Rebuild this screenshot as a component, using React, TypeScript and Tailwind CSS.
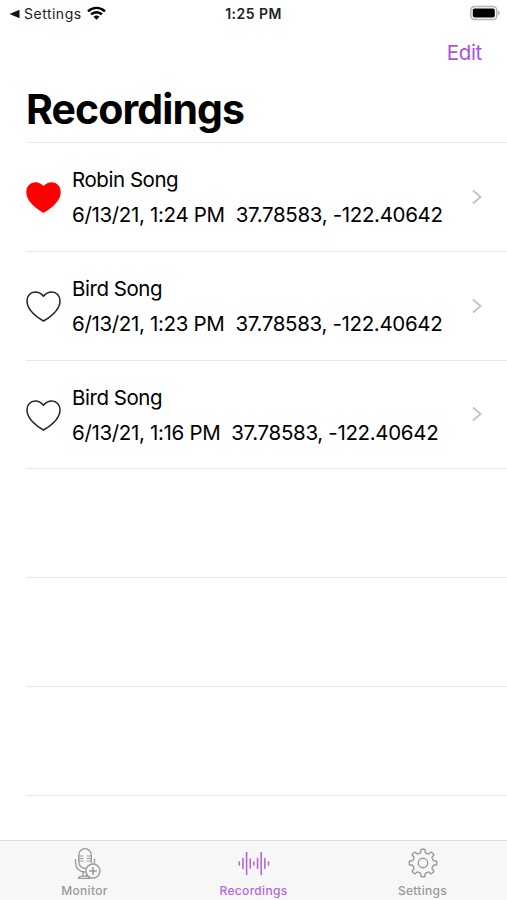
interface Recording {
  name: string;
  date: string;
  location: string;
  favorite: boolean;
}

const recordings: Recording[] = [
  { name: 'Robin Song', date: '6/13/21, 1:24 PM', location: '37.78583, -122.40642', favorite: true },
  { name: 'Bird Song', date: '6/13/21, 1:23 PM', location: '37.78583, -122.40642', favorite: false },
  { name: 'Bird Song', date: '6/13/21, 1:16 PM', location: '37.78583, -122.40642', favorite: false },
];

const emptyRows = [1, 2, 3];

// half height of each bar in the waveform icon
const bars = [1.5, 5, 11, 4.5, 1.5, 5, 11, 5, 1.5];

function gearPath() {
  const points: string[] = [];
  for (let i = 0; i < 8; i++) {
    for (const [offset, radius] of [[-16, 10.4], [-12, 10.8], [-9, 13.2], [-7, 13.8], [7, 13.8], [9, 13.2], [12, 10.8], [16, 10.4]]) {
      const a = ((i * 45 + offset) * Math.PI) / 180;
      points.push(`${(15 + radius * Math.sin(a)).toFixed(2)} ${(15 - radius * Math.cos(a)).toFixed(2)}`);
    }
  }
  return `M${points.join('L')}Z`;
}

function Heart({ filled }: { filled: boolean }) {
  return (
    <svg className="w-9 h-[35px] shrink-0 pt-[3px]" viewBox="1 0 36 32" fill={filled ? '#ff0000' : 'none'} stroke={filled ? '#ff0000' : '#222'} strokeWidth={1.5} strokeLinejoin="round">
      <path d="M18.5 5.3C16.2 2.4 13.5 1 10.3 1C5.5 1 2 4.8 2 9.9C2 17.8 8.5 24 18.5 30C28.5 24 35 17.8 35 9.9C35 4.8 31.5 1 26.7 1C23.5 1 20.8 2.4 18.5 5.3Z" />
    </svg>
  );
}

function MonitorIcon() {
  return (
    <svg className="w-[30px] h-[34px]" viewBox="0 0 30 34" fill="none" stroke="currentColor" strokeWidth={1.3} strokeLinecap="round">
      <path d="M14 21.5C10 21.5 6.8 19 6.8 15V8C6.8 4.4 9.5 1.6 13 1.6S19.3 4.4 19.3 8V15.5" />
      <path d="M7 9h4M7 11.5h4M7 14h4M15.2 9h4M15.2 11.5h4M15.2 14h4" strokeWidth={1.2} />
      <path d="M3.5 12.5v3.3C3.5 21.2 7.5 25 13 25M22.5 12.5V16M11 25v4.3M14.5 25.5v3.8M6.5 31.3C6.5 29.6 8.5 29.2 10.5 29.2h5C16.8 29.2 17.4 29.8 17.6 31.3Z" />
      <circle cx="21" cy="24" r="7" fill="#f7f7f7" />
      <path d="M21 20.7v6.6M17.7 24h6.6" strokeWidth={1.6} />
    </svg>
  );
}

function WaveIcon() {
  return (
    <svg className="w-[34px] h-[34px]" viewBox="0 0 34 34" stroke="currentColor" strokeWidth={1.6} strokeLinecap="round">
      {bars.map((h, i) => (
        <line key={i} x1={2.3 + i * 3.65} x2={2.3 + i * 3.65} y1={16.5 - h} y2={16.5 + h} />
      ))}
    </svg>
  );
}

function SettingsIcon() {
  return (
    <svg className="w-[30px] h-[30px]" viewBox="0 0 30 30" fill="none" stroke="currentColor" strokeWidth={1.4} strokeLinejoin="round">
      <path d={gearPath()} />
      <circle cx="15" cy="15" r="4.7" />
    </svg>
  );
}

export default function App() {
  return (
    <div className="w-[507px] h-[900px] flex flex-col bg-white text-black overflow-hidden font-['Inter','Liberation_Sans',sans-serif]">
      {/* Status bar */}
      <header className="grid grid-cols-3 items-center h-7 shrink-0 pl-[9px] pr-1.5">
        <div className="flex items-center text-sm text-[#222] tracking-[0.5px]">
          <svg className="w-[11px] h-2.5 mr-1" viewBox="0 0 11 10" fill="#111">
            <path d="M0.5 5L10.5 0.7V9.3Z" />
          </svg>
          Settings
          <svg className="w-[19px] h-3.5 ml-[5px] -mt-0.5" viewBox="0 0 20 14" fill="none" stroke="#000" strokeWidth={2.6}>
            <path d="M1.1 5.2C6.2 0.4 13.8 0.4 18.9 5.2M4.3 8.5C7.6 5.4 12.4 5.4 15.7 8.5" />
            <path d="M6.9 10.9C8.6 9.2 11.4 9.2 13.1 10.9L10 14Z" fill="#000" stroke="none" />
          </svg>
        </div>
        <p className="text-center text-sm font-semibold text-[#222] tracking-[0.45px] pr-[3px]">1:25 PM</p>
        <svg className="w-8 h-4 justify-self-end -mt-0.5" viewBox="0 0 32 16">
          <rect x="1.8" y="1.5" width="26" height="13" rx="3.8" fill="#fff" stroke="#b5b5b5" strokeWidth={1.5} />
          <rect x="3.8" y="3.5" width="22" height="9" rx="1.8" />
          <path d="M29.2 5.5C31.4 6.3 31.4 9.7 29.2 10.5Z" fill="#b5b5b5" />
        </svg>
      </header>

      <div className="flex justify-end items-center h-12 shrink-0 pt-0.5 pr-[25px]">
        <button className="text-[20.5px] tracking-[-0.3px] text-[#af52de]">Edit</button>
      </div>
      <h1 className="h-[66px] shrink-0 pl-[26px] pt-1.5 text-[41px] leading-[54px] font-bold tracking-[-0.9px]">Recordings</h1>

      {/* List */}
      <ul className="flex-1 min-h-0 overflow-hidden ml-[26px] border-t border-[#ececec]">
        {recordings.map((r) => (
          <li key={r.date} className="flex items-center h-[108.77px] border-b border-[#e8e8e8]">
            <Heart filled={r.favorite} />
            <div className="flex-1 -ml-px pl-[11px] pt-px text-[20.5px] leading-[35px] whitespace-pre">
              <p className="tracking-[-0.45px]">{r.name}</p>
              <p className="tracking-[-0.33px]">{r.date}  {r.location}</p>
            </div>
            <svg className="w-3 h-4 shrink-0 mr-6" viewBox="0 0 12 16" fill="none" stroke="#c4c4c6" strokeWidth={2}>
              <path d="M2 1.5L9.5 8L2 14.5" />
            </svg>
          </li>
        ))}
        {emptyRows.map((n) => (
          <li key={n} className="h-[108.77px] border-b border-[#e8e8e8]" />
        ))}
      </ul>

      {/* Tab bar */}
      <nav className="grid grid-cols-3 h-[60px] shrink-0 bg-[#f7f7f7] border-t border-[#dcdcdc] text-xs font-medium text-[#999] tracking-[0.3px]">
        <button className="flex flex-col items-center">
          <span className="flex items-center h-[42px] pt-1 pl-1"><MonitorIcon /></span>
          <span className="leading-4">Monitor</span>
        </button>
        <button className="flex flex-col items-center text-[#b368dc]">
          <span className="flex items-center h-[42px] pt-1"><WaveIcon /></span>
          <span className="leading-4">Recordings</span>
        </button>
        <button className="flex flex-col items-center">
          <span className="flex items-center h-[42px] pt-0.5"><SettingsIcon /></span>
          <span className="leading-4">Settings</span>
        </button>
      </nav>
    </div>
  );
}
